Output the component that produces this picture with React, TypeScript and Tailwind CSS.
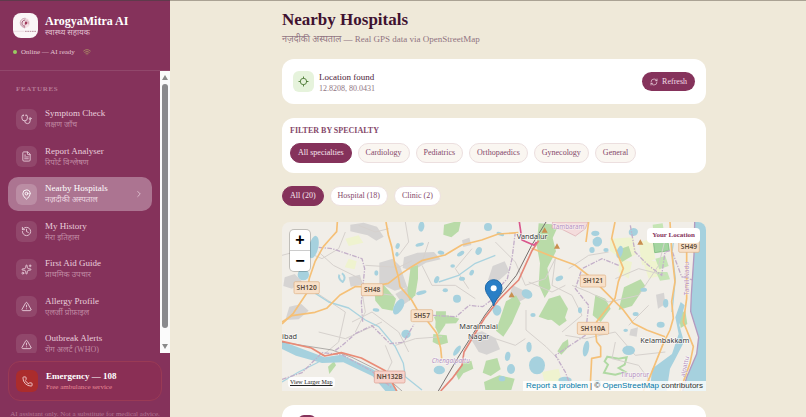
import { useState } from "react"
import type { ReactNode } from "react"
import {
  ChevronRight,
  FileText,
  History,
  Locate,
  MapPin,
  Phone,
  RefreshCw,
  Sparkles,
  Stethoscope,
  TriangleAlert,
  Wifi,
} from "lucide-react"
import type { LucideIcon } from "lucide-react"

interface Feature {
  label: string
  hindi: string
  icon: LucideIcon
}

const features: Feature[] = [
  { label: "Symptom Check", hindi: "लक्षण जाँच", icon: Stethoscope },
  { label: "Report Analyser", hindi: "रिपोर्ट विश्लेषण", icon: FileText },
  { label: "Nearby Hospitals", hindi: "नज़दीकी अस्पताल", icon: MapPin },
  { label: "My History", hindi: "मेरा इतिहास", icon: History },
  { label: "First Aid Guide", hindi: "प्राथमिक उपचार", icon: Sparkles },
  { label: "Allergy Profile", hindi: "एलर्जी प्रोफ़ाइल", icon: TriangleAlert },
  { label: "Outbreak Alerts", hindi: "रोग अलर्ट (WHO)", icon: TriangleAlert },
]

const specialties = ["All specialties", "Cardiology", "Pediatrics", "Orthopaedics", "Gynecology", "General"]
const placeTypes = ["All (20)", "Hospital (18)", "Clinic (2)"]

function Logo() {
  return (
    <svg viewBox="0 0 75 75" className="size-[25px] shrink-0 rounded-lg bg-[#faf6f7]" aria-hidden="true">
      <circle cx="36" cy="30" r="15" fill="#f3dfe4" />
      <path d="M38 16c-11-1-17 7-16 15 1 7 6 12 14 13" fill="none" stroke="#c9a3b1" strokeWidth="3" />
      <path d="M37 21c-7 0-10 5-10 10s4 9 9 9" fill="none" stroke="#9d5a77" strokeWidth="3" />
      <path d="M36 27c4-3 8 0 7 4s-6 6-8 3" fill="#a03a5c" />
      <path d="M35 36v10M42 20v6M46 25v9" stroke="#c58c9e" strokeWidth="2" />
      <path d="M4 55h30" stroke="#e0cdd4" strokeWidth="2" />
      <path d="M36 55h34" stroke="#b58a9b" strokeWidth="3" strokeDasharray="5 2" />
    </svg>
  )
}

function Sidebar() {
  const [active, setActive] = useState("Nearby Hospitals")

  return (
    <aside className="flex w-[170px] shrink-0 flex-col overflow-hidden border-t border-[#5e3a4b] bg-[#85325b]">
      <header className="h-[70px] shrink-0 border-b border-white/10 px-[13px] pt-3">
        <div className="flex items-center gap-[7px]">
          <Logo />
          <div className="whitespace-nowrap">
            <h2 className="text-[12px] leading-[14px] font-bold text-white">ArogyaMitra AI</h2>
            <p className="text-[8px] leading-[10px] text-[#e0bfce]">स्वास्थ्य सहायक</p>
          </div>
        </div>
        <div className="mt-2 flex items-center gap-1 text-[7px] leading-[12px] text-[#e3c5d3]">
          <span className="size-1 rounded-full bg-[#9bcb62]" />
          Online — AI ready
          <Wifi className="ml-1 size-2 text-[#b3a266]" />
        </div>
      </header>

      <div className="flex min-h-0 flex-1">
        <nav className="min-w-0 flex-1 overflow-hidden px-2 pt-[13px]">
          <h3 className="mb-2 px-2 text-[7px] leading-[10px] font-bold tracking-widest text-[#b57a96]">FEATURES</h3>
          <ul className="flex h-[259px] flex-col justify-between">
            {features.map(({ label, hindi, icon: Icon }) => {
              const on = label === active
              return (
                <li key={label}>
                  <button
                    type="button"
                    onClick={() => setActive(label)}
                    className={`flex h-[34px] w-full items-center gap-2 rounded-[10px] px-2 text-left whitespace-nowrap ${
                      on ? "bg-[#ac7491]" : ""
                    }`}
                  >
                    <span
                      className={`flex size-[21px] shrink-0 items-center justify-center rounded-md ${
                        on ? "bg-[#bb8da4] text-white" : "bg-[#91476b] text-[#e6cbd8]"
                      }`}
                    >
                      <Icon className="size-[11px]" />
                    </span>
                    <span className="min-w-0 flex-1">
                      <span className={`block text-[9px] leading-[11px] ${on ? "text-white" : "text-[#e9cfdb]"}`}>
                        {label}
                      </span>
                      <span className={`block text-[8px] leading-[11px] ${on ? "text-[#ecd8e1]" : "text-[#c08aa3]"}`}>
                        {hindi}
                      </span>
                    </span>
                    {on && <ChevronRight className="size-[10px] text-[#e3c8d5]" />}
                  </button>
                </li>
              )
            })}
          </ul>
        </nav>
        {/* Scroll track */}
        <div className="flex w-[10px] shrink-0 flex-col items-center justify-between bg-[#fbfbfb] py-1" aria-hidden="true">
          <svg viewBox="0 0 6 5" className="h-[5px] w-[6px] fill-[#8a8a8a]">
            <path d="M3 0l3 5H0z" />
          </svg>
          <div className="mt-1 mb-4 w-[6px] flex-1 rounded-full bg-[#8a8a8d]" />
          <svg viewBox="0 0 6 5" className="h-[5px] w-[6px] fill-[#8a8a8a]">
            <path d="M3 5l3-5H0z" />
          </svg>
        </div>
      </div>

      <footer className="h-16 shrink-0 px-2 pt-2">
        <a
          href="tel:108"
          className="flex h-10 items-center gap-2 rounded-xl border border-[#9a3a55] bg-[#8a2f55] px-[7px] whitespace-nowrap"
        >
          <span className="flex size-[22px] items-center justify-center rounded-md bg-[#ab2c2c] text-[#f3d0d0]">
            <Phone className="size-[11px]" />
          </span>
          <span className="pt-px">
            <span className="block text-[9px] leading-[11px] font-bold text-white">Emergency — 108</span>
            <span className="block text-[7px] leading-[11px] text-[#e98a95]">Free ambulance service</span>
          </span>
        </a>
        <p className="mt-2 text-center text-[7px] leading-[10px] whitespace-nowrap text-[#b27692]">
          AI assistant only. Not a substitute for medical advice.
        </p>
      </footer>
    </aside>
  )
}

function Card({ children, className }: { children: ReactNode; className: string }) {
  return <section className={`rounded-xl bg-white ${className}`}>{children}</section>
}

interface PillProps {
  label: string
  selected: boolean
  tone: "cream" | "white"
  onClick: () => void
}

function Pill({ label, selected, tone, onClick }: PillProps) {
  const idle =
    tone === "cream" ? "border-[#ecdfdf] bg-[#faf6f1] text-[#85486a]" : "border-[#eee2e0] bg-white text-[#85486a]"
  return (
    <button
      type="button"
      aria-pressed={selected}
      onClick={onClick}
      className={`h-5 rounded-full border px-[7px] text-[8px] whitespace-nowrap ${
        selected ? "border-[#85325b] bg-[#85325b] text-[#f7e6ee]" : idle
      }`}
    >
      {label}
    </button>
  )
}

// cx, cy, rx, ry, rotation
const lakes = [
  [95, 75, 14, 34, 12], [64, 158, 17, 17, 0], [283, 153, 6, 8, 0], [418, 14, 9, 15, 8],
  [413, 68, 13, 5, -15], [347, 72, 6, 9, 20], [345, 97, 5, 7, 0], [477, 92, 10, 6, 10], [536, 95, 12, 6, -30],
  [618, 15, 12, 12, 0], [590, 87, 9, 12, 25], [464, 173, 7, 11, 25], [418, 212, 16, 6, -15], [490, 205, 8, 6, 0],
  [525, 230, 12, 12, 0], [540, 170, 9, 6, 0], [569, 152, 6, 9, 30], [512, 132, 7, 5, 0], [350, 254, 13, 26, 30],
  [282, 264, 10, 5, 10], [372, 336, 14, 13, 0], [472, 444, 17, 13, 0], [525, 386, 7, 18, 35], [655, 36, 12, 5, 20],
  [735, 216, 17, 13, 30], [645, 265, 13, 16, 0], [753, 279, 8, 6, 0], [832, 169, 12, 7, -25], [946, 59, 14, 15, 30],
  [930, 84, 8, 9, 0], [940, 34, 12, 8, 0], [972, 84, 8, 6, 0], [1054, 30, 14, 12, -15], [1013, 90, 9, 19, 15],
  [765, 430, 24, 27, 0], [741, 375, 8, 16, 0], [677, 403, 8, 14, 10], [687, 441, 12, 15, 0], [912, 380, 9, 24, 10],
  [1040, 385, 19, 14, 0], [1031, 325, 7, 5, 0], [849, 474, 20, 10, 0], [946, 483, 11, 8, 0], [1136, 308, 12, 9, 0],
  [1085, 203, 10, 6, 0], [1151, 244, 8, 13, 0], [894, 265, 6, 9, 0], [1061, 276, 9, 6, 0], [660, 470, 10, 8, 0],
]

const towns = [
  "M205 8l40-6 40 12 20 30-22 12-26-16-52-12z",
  "M292 122l40-12 22 22 22 64-38 10-46-22z",
  "M366 106l40-14 50-2 20 22-44 10-40 24-30-8z",
  "M200 166l34-8 8 30-36 6z",
  "M8 166l30-10 22 22-30 22-26-8z",
  "M22 254l36-8 22 20-30 26-40 2z",
  "M540 55l22-8 6 22-24 6z",
  "M560 340l40-12 40 20 14 34-40 16-24-8z",
  "M632 132l36-14 14 30-34 30-30-4z",
  "M340 216l40-24 14 36-30 20z",
  "M1046 322l22-6-4 28-22-4z",
  "M692 190l30 14 18 20-30 16-30-14z",
  "M1122 218l24-6 4 34-22 14z",
]

const woods = [
  "M486 8l30-8h20l-6 28-22 18-24-8z",
  "M386 136l22-6v40l-8 50-18 16-6-30z",
  "M276 196l30-6 36 40-10 36-32-6-20-24z",
  "M456 286l16-10 34 6 26 8-10 14-56 2z",
  "M462 268l30 0-2 40-20 30-10-22z",
  "M454 336l40 4 4 22-26 8-20-10z",
  "M138 434l18-16 6 12-20 26z",
  "M520 452l22-28 26-8 6 24-30 14-14 20z",
  "M612 416l34-8 10 34-30 20-24-10z",
  "M606 480l46-20 46 10-10 34h-78z",
  "M770 4l60 4-18 40 10 40-26 50 10 60-18 30-18-40 4-64-10-54z",
  "M672 238l30-18 14 24-26 60-26 40-22-18z",
  "M800 230l34-10 24 40-10 30-50 4-28-10z",
  "M940 218l30 12 16 30-30 40-24-20z",
  "M1026 196l50-24 14 20-40 60-40 12z",
  "M1000 86l40-14 10 30-30 18z",
  "M800 264l36-4 18 36-22 16-30-24z",
  "M842 362l16-10 2 22-22 24-12-10z",
  "M1190 276l20-10 6 40-20 12z",
]

// Shields with a road reference: x, y, width
const shields: [string, number, number, number][] = [
  ["SH120", 36, 179, 76],
  ["SH48", 238, 185, 65],
  ["SH57", 387, 263, 65],
  ["SH121", 895, 159, 76],
  ["SH49", 1190, 55, 62],
  ["SH110A", 886, 301, 94],
]

function MapArt() {
  return (
    <svg
      viewBox="0 0 1272 507"
      preserveAspectRatio="xMidYMid slice"
      className="block w-full"
      fontFamily='"Noto Sans", "Open Sans", sans-serif'
      role="img"
      aria-label="Map around Maraimalai Nagar"
    >
      <rect width="1272" height="507" fill="#f1eee8" />

      <g fill="#eff3cf">
        <path d="M190 50l40-10 14 22-44 10zM200 110l24 8-6 24-30-6zM380 180l20 0-6 30-16-4zM984 50l70-4 10 50-40 20-40-30zM1070 60l40-10 10 60-40 20zM1010 110l40 10-10 50-30-20zM780 450l50-10 10 40-50 10zM1080 110l50 10 10 40-40 10z" />
      </g>
      <g fill="#d6d4d3">
        {towns.map((d) => (
          <path key={d} d={d} />
        ))}
      </g>
      <g fill="#b9dba8">
        {woods.map((d) => (
          <path key={d} d={d} />
        ))}
      </g>
      <path d="M1114 60l44 0 4 26-44 6z" fill="#a4d5a0" stroke="#6eb36e" strokeWidth="2" />
      <path d="M1112 8l30-4 6 40-32 4zM1120 110l30-8 10 30-28 10zM1122 150l34 0 8 22-30 4z" fill="#c5e5b4" />
      <path d="M812 0h106l-8 20-30 22-40-20-30-4z" fill="#f4dcdc" stroke="#dba8ae" strokeWidth="2" />
      <path
        d="M976 404l34 6 24-4-6 22-18 10 20 12-30 8-34-6 12-24-10-10z"
        fill="none"
        stroke="#b0d9a3"
        strokeWidth="6"
      />

      {/* Minor roads and streams */}
      <g fill="none" stroke="#d6d1cd" strokeWidth="3" strokeLinejoin="round">
        <path d="M0 100l60-16 60 26 50-30 20-50M110 90l44 40 80 40 20 40 80 10M250 130l100 6 40-20M240 210l10 60-30 60M100 210l90 60-20 90-60 50M340 370l60-20 80-6M210 300l60-30 80 60 30 60" />
        <path d="M420 130l30 60 70 0 60 40M570 80l-50 60 40 60M640 60l60 60 30 70 60-20 30-60M820 110l-10 80 60 30 30 60-60 50M860 140l60-40 60-10M870 190l50 20 60 30 90-20 60-90 20-80" />
        <path d="M732 264l0 60 60 50 40 40M850 340l60 10 90-20 60 70 90-10M1000 360l-10 50 80 20 50 70M640 350l60 20 30-20M740 180l70 30 40-20M1000 170l70-30 80 20M1100 250l-60 60" />
        <path d="M230 10l50 20 40-10M370 0l10 60-30 40M440 60l-20 60M110 330l80 20 110-50M300 480l30-60-20-50" />
      </g>
      <g fill="none" stroke="#aad3df" strokeWidth="4" strokeLinejoin="round">
        <path d="M100 214l40 26 60 18 50 36 40 20 50 60 24 50 6 40 50 40" />
        <path d="M640 100l-60 24-50 36-60 20M0 480l50-30 60-30M1180 20l-10 70 10 80-10 100" />
        <path d="M172 158c-4 12 4 18 10 22 8-8 8-18-2-26" strokeWidth="6" />
      </g>

      {/* Water bodies */}
      <g fill="#a6d1de">
        {lakes.map(([cx, cy, rx, ry, turn]) => (
          <ellipse key={`${cx}-${cy}`} cx={cx} cy={cy} rx={rx} ry={ry} transform={`rotate(${turn} ${cx} ${cy})`} />
        ))}
        <path d="M0 358l60 22 68 26 50-8 92 42 40 26 38 41h-38l-38-44-88-42-64 2-78-22-42-20z" />
        <path d="M1236 0v98l-8 120-2 50 24 78-6 50-30 70-12 41h70V0z" />
        <path d="M1196 240l12 10-16 60 14 50-26 50-16 30-10 66h-50l6-66 60-44 20-60-10-50z" />
      </g>

      {/* Administrative borders */}
      <g fill="none" stroke="#c3afc9" strokeWidth="4" strokeDasharray="14 4 4 4">
        <path d="M110 76l40 4 90 30 8 30-10 100 4 60" />
        <path d="M160 385l20-14 40-36 50-24 54 54 40-4 32-54M452 280l70 4 40-34 40 4 40-30" />
        <path d="M700 30l-10 80-14 60-40 44M1045 10l14 80 40 40 40 30 10-70 20-6 30 80 34 10" />
        <path d="M1010 130l-50-20-60 30-20 60 40 50-10 90-90 60 30 50 20 54M0 472l60-20 60-60 60 6 90 50 60 50" />
      </g>
      <path d="M1238 0l-2 98-8 120-2 50 24 78-6 50-30 70-12 41" fill="none" stroke="#b39ac0" strokeWidth="4" />

      {/* State highways */}
      <g fill="none" stroke="#f5c077" strokeWidth="5" strokeLinejoin="round">
        <path d="M166 0l-2 29-20 22-20 23-25 45-17 50-8 45-40 60-34 32" />
        <path d="M0 300l30-19 69-10 35-12 40-40 45-25h50l50-10 30-23 40-27 30-18 70-17 50-30 60-15 50-18 60-4" />
        <path d="M312 0l7 39 10 35 10 55 10 35 5 30 35 40 20 35 25 25 30 40 12 45 3 30" />
        <path d="M749 79l75 30 55 20 45 35 45 45 55 55 30 40 40 20 55 20" />
        <path d="M999 0l-10 49 15 40 20 50-15 40-10 50-55 70-5 15 5 45 12 15v30l-27 5-5 98" />
        <path d="M920 0l-8 60M1164 0l5 89 10 90-10 60 5 50-10 35-20 40-40 100-20 43" />
        <path d="M1214 80v150l-10 70 10 24 20 50-10 50-30 83" />
      </g>

      {/* National highway and railway */}
      <g fill="none" strokeLinejoin="round">
        <path d="M0 360l60 10 90 14 60 22 80 40 70 61" stroke="#8d8a88" strokeWidth="2" />
        <path d="M0 358l88 20 40 24 50-10 60 16 72 38 34 61" stroke="#e98b76" strokeWidth="5" />
        <path d="M792 0l-43 70-46 90-60 74-34 45-38 60-42 66-60 102" stroke="#77706f" strokeWidth="3" />
        <path d="M770 56l-20 30-40 88-60 60-42 54-26 42-36 60-6 40-30 40-34 37" stroke="#e58678" strokeWidth="5" />
        <path d="M712 0l8 54 36 16 8-10" stroke="#d9568c" strokeWidth="5" />
      </g>

      <g fill="#c98f4f">
        <path d="M788 16l9 16h-18zM825 64l9 16h-18zM689 210l9 16h-18zM1075 52l9 16h-18z" />
      </g>

      <g fontSize="20" fontWeight="600" fill="#5a4a3a" textAnchor="middle">
        {shields.map(([name, x, y, w]) => (
          <g key={name}>
            <rect x={x} y={y} width={w} height="36" rx="4" fill="#f8e0c8" stroke="#dfb184" strokeWidth="2" />
            <text x={x + w / 2} y={y + 25}>
              {name}
            </text>
          </g>
        ))}
        <rect x="277" y="447" width="92" height="36" rx="4" fill="#f7d3cb" stroke="#dc9a8c" strokeWidth="2" />
        <text x="323" y="472">
          NH132B
        </text>
      </g>

      <g fontSize="22" fill="#3c3c3c" stroke="#ffffff" strokeWidth="4" strokeOpacity="0.7" paintOrder="stroke">
        <text x="704" y="50">Vandalur</text>
        <text x="532" y="322">Maraimalai</text>
        <text x="558" y="350">Nagar</text>
        <text x="1075" y="363">Kelambakkam</text>
        <text x="0" y="351">ibad</text>
      </g>
      <g fontSize="19" fill="#b48fc0" stroke="#ffffff" strokeWidth="3" strokeOpacity="0.6" paintOrder="stroke">
        <text x="449" y="424" fontStyle="italic">Chengalpattu</text>
        <text x="812" y="21">Tambaram</text>
        <text x="1016" y="464">Tiruporur</text>
        <text x="1220" y="220" transform="rotate(-90 1220 220)">Tamil Nadu</text>
        <text x="1208" y="466" transform="rotate(-78 1208 466)">alpattu</text>
      </g>

      {/* Marker */}
      <path d="M635 252c-6-24-25-34-25-54a25 25 0 0 1 50 0c0 20-19 30-25 54z" fill="#2a7fc6" stroke="#1f69a8" strokeWidth="3" />
      <circle cx="635" cy="199" r="9" fill="#fff" />
    </svg>
  )
}

function MapPanel() {
  return (
    <section className="relative mt-4 overflow-hidden rounded-t-lg">
      <MapArt />
      <div className="absolute top-2 left-2 flex flex-col rounded-sm bg-white font-['Liberation_Sans',sans-serif] text-[16px] font-bold text-black shadow-[0_0_0_1px_rgba(0,0,0,0.2)]">
        <button type="button" aria-label="Zoom in" className="flex h-[21px] w-5 items-center justify-center border-b border-[#ccc]">
          +
        </button>
        <button type="button" aria-label="Zoom out" className="flex size-5 items-center justify-center">
          −
        </button>
      </div>
      <span className="absolute top-[6px] right-[6px] rounded-sm bg-white px-[5px] text-[7px] leading-[15px] font-bold text-[#85325b]">
        Your Location
      </span>
      <a
        href="#map"
        className="absolute bottom-[3px] left-[6px] rounded-sm bg-white/85 px-[2px] text-[6px] leading-[11px] text-[#222] underline"
      >
        View Larger Map
      </a>
      <p className="absolute right-0 bottom-0 bg-white/80 px-[3px] font-['Liberation_Sans',sans-serif] text-[8px] leading-[10px] whitespace-nowrap text-[#333]">
        <a href="#report" className="text-[#0078a8]">Report a problem</a> | ©{" "}
        <a href="#osm" className="text-[#0078a8]">OpenStreetMap</a> contributors
      </p>
    </section>
  )
}

export default function App() {
  const [specialty, setSpecialty] = useState("All specialties")
  const [placeType, setPlaceType] = useState("All (20)")

  return (
    <div className="flex h-screen overflow-hidden bg-[#efe9d9] font-['Liberation_Serif','Noto_Sans_Devanagari',serif]">
      <Sidebar />
      <main className="min-w-0 flex-1 overflow-hidden border-t border-[#aaa294] pl-3">
        <div className="mx-auto w-full max-w-[424px]">
          <h1 className="pt-[8px] text-[17px] leading-[22px] font-bold text-[#3f1230]">Nearby Hospitals</h1>
          <p className="mt-[2px] text-[9px] leading-[12px] text-[#8f7482]">
            नज़दीकी अस्पताल — Real GPS data via OpenStreetMap
          </p>

          <Card className="mt-[14px] flex h-[45px] items-center gap-[5px] px-[11px]">
            <span className="flex size-[21px] items-center justify-center rounded-md bg-[#e6f3dc] text-[#4b7a35]">
              <Locate className="size-[11px]" />
            </span>
            <div className="flex-1 pt-px">
              <p className="text-[9px] leading-[12px] text-[#4e1d3a]">Location found</p>
              <p className="text-[8px] leading-[11px] text-[#8f7482]">12.8208, 80.0431</p>
            </div>
            <button
              type="button"
              className="flex h-[19px] items-center gap-1 rounded-full bg-[#85325b] px-2 text-[8px] text-[#f3dde7]"
            >
              <RefreshCw className="size-2" />
              Refresh
            </button>
          </Card>

          <Card className="mt-[14px] px-2 pt-2 pb-[10px]">
            <h2 className="text-[8px] leading-[10px] font-bold text-[#85486a]">FILTER BY SPECIALTY</h2>
            <div className="mt-[7px] flex flex-wrap gap-[6px]">
              {specialties.map((name) => (
                <Pill
                  key={name}
                  label={name}
                  tone="cream"
                  selected={name === specialty}
                  onClick={() => setSpecialty(name)}
                />
              ))}
            </div>
          </Card>

          <div className="mt-[13px] flex gap-[6px]">
            {placeTypes.map((name) => (
              <Pill
                key={name}
                label={name}
                tone="white"
                selected={name === placeType}
                onClick={() => setPlaceType(name)}
              />
            ))}
          </div>

          <MapPanel />

          <Card className="mt-[14px] px-4 pt-[10px] pb-4">
            <span className="block size-[18px] rounded-md bg-[#85325b]" />
          </Card>
        </div>
      </main>
    </div>
  )
}
